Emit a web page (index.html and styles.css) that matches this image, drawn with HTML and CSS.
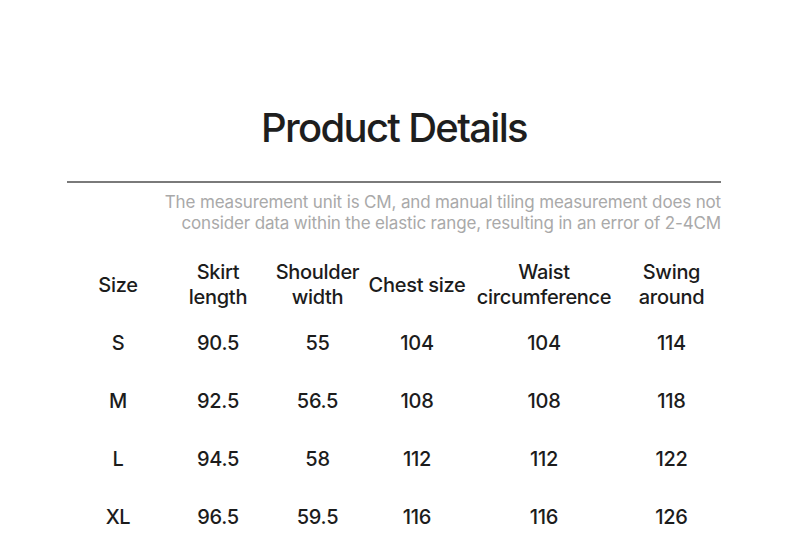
FILE: index.html
```html
<!DOCTYPE html>
<html>
<head>
<meta charset="utf-8">
<link rel="stylesheet" href="styles.css">
</head>
<body>
<main class="page">
  <h1 class="title">Product Details</h1>
  <div class="rule"></div>
  <p class="note">The measurement unit is CM, and manual tiling measurement does not<br>consider data within the elastic range, resulting in an error of 2-4CM</p>
  <div class="table">
    <div class="cell head">Size</div>
    <div class="cell head">Skirt<br>length</div>
    <div class="cell head">Shoulder<br>width</div>
    <div class="cell head">Chest size</div>
    <div class="cell head">Waist<br>circumference</div>
    <div class="cell head">Swing<br>around</div>

    <div class="cell">S</div><div class="cell">90.5</div><div class="cell">55</div><div class="cell">104</div><div class="cell">104</div><div class="cell">114</div>
    <div class="cell">M</div><div class="cell">92.5</div><div class="cell">56.5</div><div class="cell">108</div><div class="cell">108</div><div class="cell">118</div>
    <div class="cell">L</div><div class="cell">94.5</div><div class="cell">58</div><div class="cell">112</div><div class="cell">112</div><div class="cell">122</div>
    <div class="cell">XL</div><div class="cell">96.5</div><div class="cell">59.5</div><div class="cell">116</div><div class="cell">116</div><div class="cell">126</div>
  </div>
</main>
</body>
</html>
```
FILE: styles.css
```css
html, body {
  margin: 0;
  padding: 0;
  background: #ffffff;
}
body {
  font-family: Inter, "Liberation Sans", sans-serif;
  color: #1c1c1c;
}
.page {
  width: 654px;
  margin: 0 auto;
  padding-top: 104px;
  position: relative;
  left: -1px;
}
.title {
  margin: 0;
  text-align: center;
  font-size: 40px;
  font-weight: 500;
  letter-spacing: -1.7px;
  line-height: 48px;
  color: #1e1e1e;
}
.rule {
  margin-top: 29px;
  height: 2px;
  background: #7a7a7a;
}
.note {
  margin: 9px 0 0;
  text-align: right;
  font-size: 17px;
  line-height: 21px;
  letter-spacing: -0.15px;
  color: #a9a9a9;
}
.table {
  margin-top: 22px;
  display: grid;
  grid-template-columns: 102px 98px 101px 98px 156px 99px;
  grid-template-rows: 58px;
  grid-auto-rows: 58px;
}
.cell {
  display: flex;
  align-items: center;
  justify-content: center;
  text-align: center;
  font-size: 20px;
  font-weight: 500;
  line-height: 25px;
  letter-spacing: -0.3px;
  color: #1c1c1c;
}
```
